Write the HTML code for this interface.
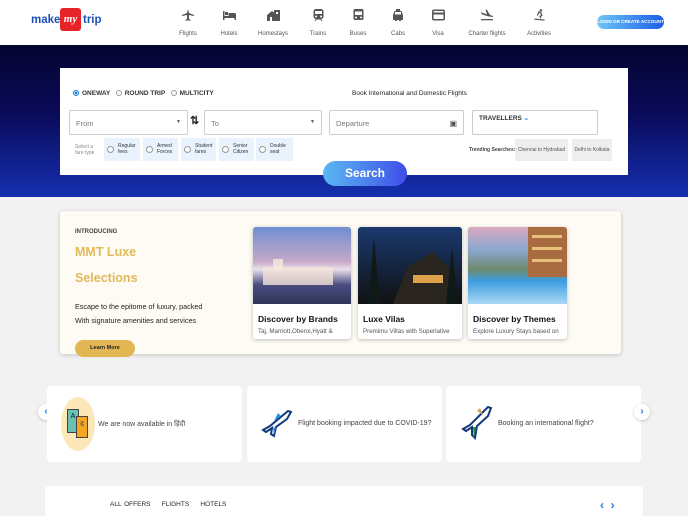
<!DOCTYPE html>
<html><head><meta charset="utf-8"><style>
*{box-sizing:border-box;margin:0;padding:0}
body{width:688px;height:512px;overflow:hidden;background:#f2f2f2;font-family:"Liberation Sans",sans-serif;position:relative;color:#333}
.abs{position:absolute}
#hdr{left:0;top:0;width:688px;height:45px;background:#fff;box-shadow:0 1px 3px rgba(0,0,0,.2)}
#hero{left:0;top:45px;width:688px;height:152px;background:linear-gradient(180deg,#050530 0%,#0a0a5a 45%,#1530b0 100%)}
.nav{top:9px;width:50px;text-align:center;font-size:6px;color:#555}
.nav svg{display:block;margin:0 auto 10px}
#box{left:60px;top:68px;width:568px;height:107px;background:#fff}
.inp{border:1px solid #ccc;border-radius:2px;height:25px;font-size:7.5px;color:#777;padding:8px 6px}
.rad{display:inline-block;width:6px;height:6px;border:1px solid #999;border-radius:50%;vertical-align:-1px;margin-right:3px}
.fare{top:138px;height:23px;background:#e8f3fd;font-size:5px;color:#333;padding:5px 2px 0 14px;line-height:6px}
.fare:before{content:"";position:absolute;left:3px;top:8px;width:5px;height:5px;border:1px solid #999;border-radius:50%;background:#fff}
#lux{left:60px;top:211px;width:561px;height:143px;background:#fdfbf4;border-radius:3px;box-shadow:0 1px 4px rgba(0,0,0,.2)}
.card{top:227px;width:98px;height:112px;background:#fff;border-radius:3px;box-shadow:0 1px 4px rgba(0,0,0,.25);overflow:hidden}
.card .img{height:77px}
.card b{display:block;font-size:8.5px;color:#111;padding:10px 5px 4px}
.card span{display:block;font-size:6.2px;color:#555;padding:0 5px;white-space:nowrap}
.tile{top:386px;height:76px;background:#fff;border-radius:4px;font-size:7px;color:#444}
.arr{width:16px;height:16px;border-radius:50%;background:#fff;box-shadow:0 1px 3px rgba(0,0,0,.2);color:#1a7de0;font-size:10px;font-weight:bold;text-align:center;line-height:15px}
</style></head><body>
<div id="hdr" class="abs"></div>
<div class="abs" style="left:31px;top:14px;font-size:11.5px;font-weight:bold;color:#1b4fb4">make</div>
<div class="abs" style="left:60px;top:8px;width:21px;height:23px;background:#e7232a;border-radius:3px;color:#fff;font-style:italic;font-weight:bold;font-size:11px;text-align:center;line-height:22px;font-family:'Liberation Serif',serif">my</div>
<div class="abs" style="left:83px;top:14px;font-size:11.5px;font-weight:bold;color:#1b4fb4">trip</div>

<div class="nav abs" style="left:163px"><svg width="12" height="12" viewBox="0 0 12 12"><path d="M6 0 L7 4 L12 6 L12 7 L7 6 L7 10 L8.5 11 L8.5 12 L6 11.3 L3.5 12 L3.5 11 L5 10 L5 6 L0 7 L0 6 L5 4 Z" fill="#555"/></svg>Flights</div>
<div class="nav abs" style="left:204px"><svg width="13" height="12" viewBox="0 0 13 12"><path d="M0 2h1.5v5H13v4h-1.5V9h-10v2H0z M2 3h3v3H2z M5.5 4h6a1.5 1.5 0 0 1 1.5 1.5V7h-7.5z" fill="#555"/></svg>Hotels</div>
<div class="nav abs" style="left:248px"><svg width="13" height="12" viewBox="0 0 13 12"><path d="M0 6 L5 2 L7 3.5 V1 h6 v11 H0z" fill="#555"/><rect x="3" y="8" width="2" height="4" fill="#fff"/><rect x="9" y="3" width="2" height="2" fill="#fff"/></svg>Homestays</div>
<div class="nav abs" style="left:293px"><svg width="11" height="12" viewBox="0 0 11 12"><rect x="0.5" y="0" width="10" height="10" rx="2.5" fill="#555"/><rect x="2" y="2" width="7" height="3" fill="#fff"/><circle cx="3" cy="7.5" r="1" fill="#fff"/><circle cx="8" cy="7.5" r="1" fill="#fff"/><path d="M2 12l1.5-2h4L9 12" stroke="#555" fill="none"/></svg>Trains</div>
<div class="nav abs" style="left:333px"><svg width="11" height="12" viewBox="0 0 11 12"><rect x="0.5" y="0" width="10" height="11" rx="1.5" fill="#555"/><rect x="2" y="2.5" width="7" height="3.5" fill="#fff"/><circle cx="3" cy="8.5" r="1" fill="#fff"/><circle cx="8" cy="8.5" r="1" fill="#fff"/></svg>Buses</div>
<div class="nav abs" style="left:373px"><svg width="12" height="12" viewBox="0 0 12 12"><path d="M4 0h4v2h1.5L11 6v5H9v1H7v-1H5v1H3v-1H1V6l1.5-4H4z" fill="#555"/><rect x="3" y="3" width="6" height="2.5" fill="#fff"/></svg>Cabs</div>
<div class="nav abs" style="left:413px"><svg width="13" height="12" viewBox="0 0 13 11"><rect x="0.8" y="0.8" width="11.4" height="9.4" rx="1" fill="none" stroke="#555" stroke-width="1.5"/><rect x="1" y="3" width="11" height="2" fill="#555"/></svg>Visa</div>
<div class="nav abs" style="left:462px"><svg width="14" height="12" viewBox="0 0 14 12"><path d="M1 3 L3 4 L7 5.5 L5.5 0.5 L7 1 L10 6 L13 7 L13 8 L9 7.5 L2 5.5z" fill="#555"/><rect x="1" y="10" width="12" height="1.3" fill="#555"/></svg>Charter flights</div>
<div class="nav abs" style="left:514px"><svg width="13" height="12" viewBox="0 0 13 13"><circle cx="8" cy="1.5" r="1.4" fill="#555"/><path d="M5 3l3 1 1 3-2 1 1 2M6 4l-2 3M1 11l11 1" stroke="#555" stroke-width="1.3" fill="none"/></svg>Activities</div>
<div class="abs" style="left:597px;top:15px;width:67px;height:14px;border-radius:8px;background:linear-gradient(90deg,#6ec6f8,#1b5de6);color:#fff;font-size:4.6px;font-weight:bold;text-align:center;line-height:14px">LOGIN OR CREATE ACCOUNT</div>

<div id="hero" class="abs"></div>
<div id="box" class="abs"></div>
<div class="abs" style="left:73px;top:90px;font-size:6.5px;font-weight:bold;color:#333;white-space:nowrap">
<span class="rad" style="border-color:#1a7de0;background:radial-gradient(#1a7de0 45%,#fff 50%)"></span>ONEWAY&nbsp;&nbsp;&nbsp;<span class="rad"></span>ROUND TRIP&nbsp;&nbsp;&nbsp;<span class="rad"></span>MULTICITY</div>
<div class="abs" style="left:352px;top:90px;font-size:6.5px;color:#222">Book International and Domestic Flights</div>
<div class="abs inp" style="left:69px;top:110px;width:119px">From<span style="float:right;font-size:5px;color:#555">▼</span></div>
<div class="abs" style="left:190px;top:114px;font-size:11px;font-weight:bold;color:#222">⇅</div>
<div class="abs inp" style="left:204px;top:110px;width:118px">To<span style="float:right;font-size:5px;color:#555">▼</span></div>
<div class="abs inp" style="left:329px;top:110px;width:135px">Departure<span style="float:right;font-size:8px;color:#555">▣</span></div>
<div class="abs inp" style="left:472px;top:110px;width:126px;padding-top:3px;font-size:6.5px;font-weight:bold;color:#333">TRAVELLERS <span style="color:#1a7de0">⌄</span></div>
<div class="abs" style="left:75px;top:144px;font-size:5px;color:#888;line-height:6px">Select a<br>fare type</div>
<div class="abs fare" style="left:104px;width:36px">Regular<br>fees</div>
<div class="abs fare" style="left:143px;width:35px">Armed<br>Forces</div>
<div class="abs fare" style="left:181px;width:35px">Student<br>fares</div>
<div class="abs fare" style="left:219px;width:35px">Senior<br>Citizen</div>
<div class="abs fare" style="left:256px;width:37px">Double<br>seat</div>
<div class="abs" style="left:469px;top:147px;font-size:5px;font-weight:bold;color:#444">Trending Searches:</div>
<div class="abs" style="left:515px;top:139px;width:53px;height:22px;background:#eee;font-size:5px;color:#555;text-align:center;line-height:22px">Chennai to Hydrabad</div>
<div class="abs" style="left:572px;top:139px;width:40px;height:22px;background:#eee;font-size:5px;color:#555;text-align:center;line-height:22px">Delhi to Kolkata</div>
<div class="abs" style="left:323px;top:161px;width:84px;height:25px;border-radius:13px;background:linear-gradient(90deg,#5bb8f2,#3f4ee8);color:#fff;font-size:12px;font-weight:bold;text-align:center;line-height:25px">Search</div>

<div id="lux" class="abs"></div>
<div class="abs" style="left:75px;top:229px;font-size:6px;font-weight:bold;color:#444">INTRODUCING</div>
<div class="abs" style="left:75px;top:245px;font-size:12.5px;font-weight:bold;color:#e0b95a">MMT Luxe</div>
<div class="abs" style="left:75px;top:271px;font-size:12.5px;font-weight:bold;color:#e0b95a">Selections</div>
<div class="abs" style="left:75px;top:300px;font-size:7.2px;color:#222;line-height:14px">Escape to the epitome of luxury, packed<br>With signature amenities and services</div>
<div class="abs" style="left:75px;top:340px;width:60px;height:17px;border-radius:9px;background:#e2b753;font-size:5.5px;font-weight:bold;color:#222;text-align:center;line-height:17px">Learn More</div>

<div class="card abs" style="left:253px"><div class="img" style="background:linear-gradient(180deg,#6f8fd0 0%,#c7a9c9 45%,#e8e0ea 55%,#4b4d80 75%,#2c3556 100%)"><svg width="98" height="77"><rect x="10" y="40" width="70" height="18" fill="#f2e2d8" opacity=".8"/><rect x="20" y="32" width="10" height="10" fill="#f6e8dc" opacity=".8"/></svg></div><b>Discover by Brands</b><span>Taj, Marriott,Oberoi,Hyatt &amp;</span></div>
<div class="card abs" style="left:358px;width:104px"><div class="img" style="background:linear-gradient(180deg,#1c3a6e 0%,#16294a 40%,#111 100%)"><svg width="104" height="77"><path d="M35 77 L50 40 L75 25 L95 45 L100 77z" fill="#2b2520"/><rect x="55" y="48" width="30" height="8" fill="#f0b050" opacity=".9"/><path d="M10 77 L16 10 L22 77z M88 77 L94 20 L100 77z" fill="#0f1a18"/></svg></div><b>Luxe Vilas</b><span>Premimu Villas with Superlative</span></div>
<div class="card abs" style="left:468px;width:99px"><div class="img" style="background:linear-gradient(180deg,#d9a9c0 0%,#8aa7cf 30%,#6d8a6e 55%,#3c9de0 70%,#a9d8f4 100%)"><svg width="99" height="77"><rect x="60" y="0" width="39" height="50" fill="#a86c40"/><rect x="64" y="8" width="30" height="3" fill="#e8c17a"/><rect x="64" y="20" width="30" height="3" fill="#e8c17a"/><rect x="64" y="32" width="30" height="3" fill="#e8c17a"/></svg></div><b>Discover by Themes</b><span>Explore Luxury Stays based on</span></div>

<div class="arr abs" style="left:38px;top:404px">‹</div>
<div class="tile abs" style="left:47px;width:195px"></div>
<div class="abs" style="left:61px;top:397px;width:34px;height:54px;border-radius:50%;background:#fbe7b8"></div>
<div class="abs" style="left:67px;top:409px;width:12px;height:24px;background:#6cc0b0;border:1px solid #444;font-size:7px;font-weight:bold;color:#245;text-align:center;padding-top:3px">A</div>
<div class="abs" style="left:76px;top:416px;width:12px;height:22px;background:#f4a623;border:1px solid #444;font-size:7px;color:#333;text-align:center;padding-top:3px">द</div>
<div class="abs" style="left:98px;top:420px;font-size:7px;color:#444;font-family:'Liberation Sans','Noto Sans CJK SC',sans-serif">We are now available in हिंदी</div>
<div class="tile abs" style="left:247px;width:195px"></div>
<svg class="abs" style="left:260px;top:408px" width="34" height="30" viewBox="0 0 34 30"><path d="M3 22 L10 18 L22 8 L28 3 L31 4 L27 11 L16 19 L14 28 L11 26 L12 20 L6 24z" fill="#fff" stroke="#123a7a" stroke-width="2"/><path d="M14 13 L21 8 L18 5z" fill="#2a8de6"/><path d="M13 20 L14 27 L16 19z" fill="#2a8de6"/></svg>
<div class="abs" style="left:298px;top:420px;font-size:7px;color:#444">Flight booking impacted due to COVID-19?</div>
<div class="tile abs" style="left:446px;width:195px"></div>
<svg class="abs" style="left:460px;top:405px" width="34" height="36" viewBox="0 0 34 36"><path d="M3 24 L10 20 L22 8 L28 2 L31 3 L28 11 L17 21 L15 33 L12 30 L12 22 L6 26z" fill="#fff" stroke="#123a7a" stroke-width="2"/><path d="M17 6 L23 10 L20 3z" fill="#d9a05a"/><path d="M13 22 L14 34 L16 22z" fill="#1e8a3a"/></svg>
<div class="abs" style="left:498px;top:420px;font-size:7px;color:#444">Booking an international flight?</div>
<div class="arr abs" style="left:634px;top:404px">›</div>

<div class="abs" style="left:45px;top:486px;width:598px;height:30px;background:#fff;border-radius:4px"></div>
<div class="abs" style="left:110px;top:501px;font-size:6.5px;color:#222;word-spacing:1px">ALL OFFERS&nbsp;&nbsp;&nbsp; FLIGHTS&nbsp;&nbsp;&nbsp; HOTELS</div>
<div class="abs" style="left:600px;top:498px;font-size:12px;font-weight:bold;color:#1a7de0">‹&nbsp;&nbsp;›</div>
</body></html>
